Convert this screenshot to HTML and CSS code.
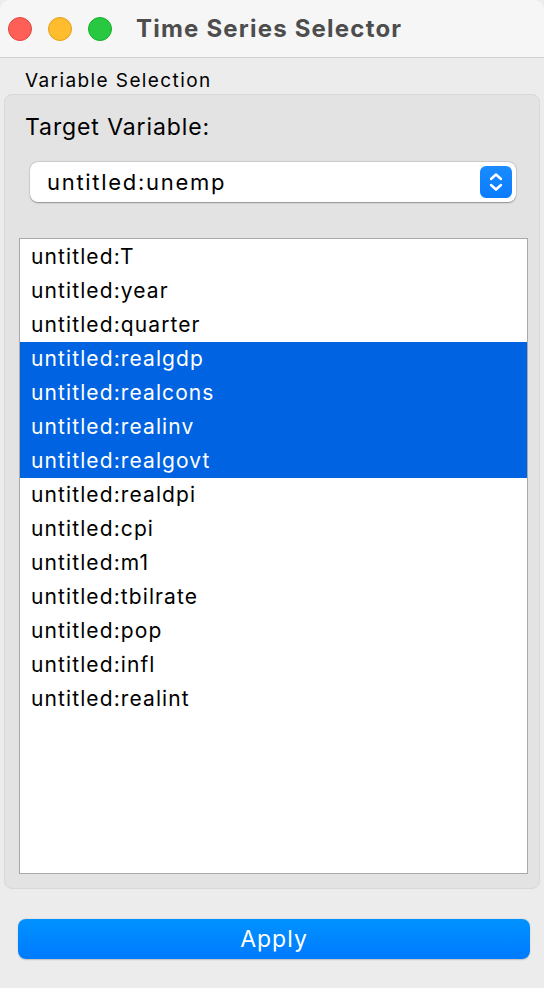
FILE: index.html
```html
<!DOCTYPE html>
<html>
<head>
<meta charset="utf-8">
<link rel="stylesheet" href="styles.css">
</head>
<body>
<div class="window">
  <div class="titlebar">
    <div class="lights">
      <span class="light red"></span>
      <span class="light yellow"></span>
      <span class="light green"></span>
    </div>
    <div class="title">Time Series Selector</div>
  </div>
  <div class="content">
    <div class="group-label">Variable Selection</div>
    <div class="group">
      <div class="field-label">Target Variable:</div>
      <div class="combo">
        <span class="combo-text">untitled:unemp</span>
        <span class="stepper">
          <svg width="20" height="24" viewBox="0 0 20 24"><path d="M5 9 L10 4.5 L15 9 M5 15 L10 19.5 L15 15" fill="none" stroke="#fff" stroke-width="2.4" stroke-linecap="round" stroke-linejoin="round"/></svg>
        </span>
      </div>
      <ul class="list">
        <li>untitled:T</li>
        <li>untitled:year</li>
        <li>untitled:quarter</li>
        <li class="sel">untitled:realgdp</li>
        <li class="sel">untitled:realcons</li>
        <li class="sel">untitled:realinv</li>
        <li class="sel">untitled:realgovt</li>
        <li>untitled:realdpi</li>
        <li>untitled:cpi</li>
        <li>untitled:m1</li>
        <li>untitled:tbilrate</li>
        <li>untitled:pop</li>
        <li>untitled:infl</li>
        <li>untitled:realint</li>
      </ul>
    </div>
    <div class="actions">
      <button class="apply">Apply</button>
    </div>
  </div>
</div>
</body>
</html>
```
FILE: styles.css
```css
* { box-sizing: border-box; }
html, body { margin: 0; padding: 0; }
body {
  width: 544px;
  height: 988px;
  background: #ececec;
  font-family: Inter, "Noto Sans", "Liberation Sans", sans-serif;
  color: #000;
  overflow: hidden;
}
.window {
  height: 988px;
  display: flex;
  flex-direction: column;
  background: #ececec;
}
.titlebar {
  height: 58px;
  flex: none;
  background: #f6f6f6;
  border-bottom: 1px solid #d0d0d0;
  border-radius: 10px 10px 0 0;
  display: flex;
  align-items: center;
  padding-left: 8px;
}
.lights { display: flex; gap: 16px; padding-top: 1px; }
.light {
  width: 24px; height: 24px; border-radius: 50%;
  display: block;
}
.red { background: #fe5f57; border: 1px solid #e2463f; }
.yellow { background: #febc2e; border: 1px solid #e1a116; }
.green { background: #28c840; border: 1px solid #14ae2b; }
.title {
  margin-left: 24px;
  font-size: 24px;
  font-weight: 700;
  color: #4d4d4d;
  letter-spacing: 1.2px;
}
.content {
  flex: 1;
  display: flex;
  flex-direction: column;
  padding: 10px 4px 0 4px;
}
.group-label {
  font-size: 19px;
  letter-spacing: 1.4px;
  padding-left: 21px;
  height: 26px;
  line-height: 26px;
}
.group {
  height: 795px;
  background: #e3e3e3;
  border: 1px solid #d8d8d8;
  border-radius: 8px;
  display: flex;
  flex-direction: column;
  padding: 14px 11px 14px 14px;
}
.field-label {
  font-size: 23px;
  letter-spacing: 0.9px;
  padding-left: 6px;
  height: 36px;
  line-height: 36px;
}
.combo {
  margin: 17px 12px 0 11px;
  height: 40px;
  background: #fff;
  border-radius: 8px;
  box-shadow: 0 0.5px 1.5px rgba(0,0,0,0.35), 0 0 0 0.5px rgba(0,0,0,0.08);
  display: flex;
  align-items: center;
  justify-content: space-between;
  padding: 0 4px 0 17px;
}
.combo-text { font-size: 22px; letter-spacing: 1.7px; }
.stepper {
  width: 32px; height: 32px;
  background: linear-gradient(#1a8cff, #0a7aff);
  border-radius: 6px;
  display: flex; align-items: center; justify-content: center;
}
.list {
  list-style: none;
  margin: 36px 0 0 0;
  padding: 1px 0;
  flex: 1;
  background: #fff;
  border: 1px solid #a9a9a9;
}
.list li {
  height: 34px;
  line-height: 34px;
  font-size: 21px;
  letter-spacing: 1.1px;
  padding-left: 11px;
}
.list li.sel {
  background: #0063e1;
  color: #fff;
}
.actions {
  padding: 30px 10px 0 14px;
}
.apply {
  width: 512px;
  height: 40px;
  border: none;
  border-radius: 8px;
  background: linear-gradient(#0092ff, #007aff);
  color: #fff;
  font-family: inherit;
  font-size: 23px;
  letter-spacing: 1px;
  box-shadow: 0 0.5px 1.5px rgba(0,0,0,0.2);
}
```
